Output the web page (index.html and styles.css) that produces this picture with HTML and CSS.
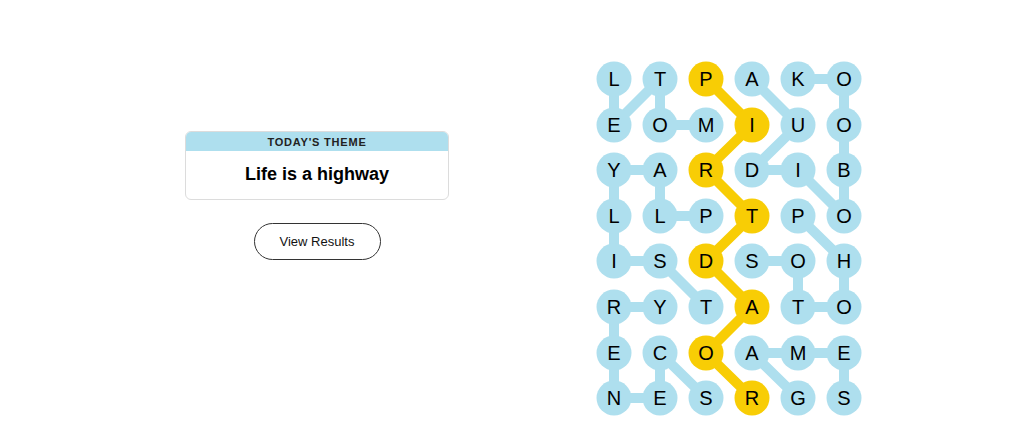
FILE: index.html
```html
<!DOCTYPE html>
<html lang="en">
<head>
  <meta charset="UTF-8">
  <title>Strands</title>
  <link rel="stylesheet" href="styles.css">
</head>
<body>

  <div class="board">
    <div class="panel">
      <div class="theme-card">
        <div class="theme-label">Today's Theme</div>
        <div class="theme-title">Life is a highway</div>
      </div>
      <button class="results-btn">View Results</button>
    </div>

    <svg class="grid" width="268" height="355" viewBox="-2 -1 268 355">
      <g class="links found">
        <!-- MOTEL -->
        <line x1="109" y1="63" x2="63" y2="63"/>
        <line x1="63" y1="63" x2="63" y2="17"/>
        <line x1="63" y1="17" x2="17" y2="63"/>
        <line x1="17" y1="63" x2="17" y2="17"/>
        <!-- PLAYLIST -->
        <line x1="109" y1="154" x2="63" y2="154"/>
        <line x1="63" y1="154" x2="63" y2="108"/>
        <line x1="63" y1="108" x2="17" y2="108"/>
        <line x1="17" y1="108" x2="17" y2="154"/>
        <line x1="17" y1="154" x2="17" y2="199"/>
        <line x1="17" y1="199" x2="63" y2="199"/>
        <line x1="63" y1="199" x2="109" y2="245"/>
        <!-- SCENERY -->
        <line x1="109" y1="336" x2="63" y2="291"/>
        <line x1="63" y1="291" x2="63" y2="336"/>
        <line x1="63" y1="336" x2="17" y2="336"/>
        <line x1="17" y1="336" x2="17" y2="291"/>
        <line x1="17" y1="291" x2="17" y2="245"/>
        <line x1="17" y1="245" x2="63" y2="245"/>
        <!-- AUDIOBOOK -->
        <line x1="155" y1="17" x2="201" y2="63"/>
        <line x1="201" y1="63" x2="155" y2="108"/>
        <line x1="155" y1="108" x2="201" y2="108"/>
        <line x1="201" y1="108" x2="247" y2="154"/>
        <line x1="247" y1="154" x2="247" y2="108"/>
        <line x1="247" y1="108" x2="247" y2="63"/>
        <line x1="247" y1="63" x2="247" y2="17"/>
        <line x1="247" y1="17" x2="201" y2="17"/>
        <!-- GAMES -->
        <line x1="201" y1="336" x2="155" y2="291"/>
        <line x1="155" y1="291" x2="201" y2="291"/>
        <line x1="201" y1="291" x2="247" y2="291"/>
        <line x1="247" y1="291" x2="247" y2="336"/>
        <!-- PHOTOS -->
        <line x1="201" y1="154" x2="247" y2="199"/>
        <line x1="247" y1="199" x2="247" y2="245"/>
        <line x1="247" y1="245" x2="201" y2="245"/>
        <line x1="201" y1="245" x2="201" y2="199"/>
        <line x1="201" y1="199" x2="155" y2="199"/>
      </g>
      <g class="links spangram">
        <!-- ROADTRIP -->
        <line x1="155" y1="336" x2="109" y2="291"/>
        <line x1="109" y1="291" x2="155" y2="245"/>
        <line x1="155" y1="245" x2="109" y2="199"/>
        <line x1="109" y1="199" x2="155" y2="154"/>
        <line x1="155" y1="154" x2="109" y2="108"/>
        <line x1="109" y1="108" x2="155" y2="63"/>
        <line x1="155" y1="63" x2="109" y2="17"/>
      </g>

      <g class="cells">
        <circle cx="17" cy="17"/><circle cx="63" cy="17"/><circle class="sp" cx="109" cy="17"/><circle cx="155" cy="17"/><circle cx="201" cy="17"/><circle cx="247" cy="17"/>
        <circle cx="17" cy="63"/><circle cx="63" cy="63"/><circle cx="109" cy="63"/><circle class="sp" cx="155" cy="63"/><circle cx="201" cy="63"/><circle cx="247" cy="63"/>
        <circle cx="17" cy="108"/><circle cx="63" cy="108"/><circle class="sp" cx="109" cy="108"/><circle cx="155" cy="108"/><circle cx="201" cy="108"/><circle cx="247" cy="108"/>
        <circle cx="17" cy="154"/><circle cx="63" cy="154"/><circle cx="109" cy="154"/><circle class="sp" cx="155" cy="154"/><circle cx="201" cy="154"/><circle cx="247" cy="154"/>
        <circle cx="17" cy="199"/><circle cx="63" cy="199"/><circle class="sp" cx="109" cy="199"/><circle cx="155" cy="199"/><circle cx="201" cy="199"/><circle cx="247" cy="199"/>
        <circle cx="17" cy="245"/><circle cx="63" cy="245"/><circle cx="109" cy="245"/><circle class="sp" cx="155" cy="245"/><circle cx="201" cy="245"/><circle cx="247" cy="245"/>
        <circle cx="17" cy="291"/><circle cx="63" cy="291"/><circle class="sp" cx="109" cy="291"/><circle cx="155" cy="291"/><circle cx="201" cy="291"/><circle cx="247" cy="291"/>
        <circle cx="17" cy="336"/><circle cx="63" cy="336"/><circle cx="109" cy="336"/><circle class="sp" cx="155" cy="336"/><circle cx="201" cy="336"/><circle cx="247" cy="336"/>
      </g>

      <g class="letters">
        <text x="17" y="17">L</text><text x="63" y="17">T</text><text x="109" y="17">P</text><text x="155" y="17">A</text><text x="201" y="17">K</text><text x="247" y="17">O</text>
        <text x="17" y="63">E</text><text x="63" y="63">O</text><text x="109" y="63">M</text><text x="155" y="63">I</text><text x="201" y="63">U</text><text x="247" y="63">O</text>
        <text x="17" y="108">Y</text><text x="63" y="108">A</text><text x="109" y="108">R</text><text x="155" y="108">D</text><text x="201" y="108">I</text><text x="247" y="108">B</text>
        <text x="17" y="154">L</text><text x="63" y="154">L</text><text x="109" y="154">P</text><text x="155" y="154">T</text><text x="201" y="154">P</text><text x="247" y="154">O</text>
        <text x="17" y="199">I</text><text x="63" y="199">S</text><text x="109" y="199">D</text><text x="155" y="199">S</text><text x="201" y="199">O</text><text x="247" y="199">H</text>
        <text x="17" y="245">R</text><text x="63" y="245">Y</text><text x="109" y="245">T</text><text x="155" y="245">A</text><text x="201" y="245">T</text><text x="247" y="245">O</text>
        <text x="17" y="291">E</text><text x="63" y="291">C</text><text x="109" y="291">O</text><text x="155" y="291">A</text><text x="201" y="291">M</text><text x="247" y="291">E</text>
        <text x="17" y="336">N</text><text x="63" y="336">E</text><text x="109" y="336">S</text><text x="155" y="336">R</text><text x="201" y="336">G</text><text x="247" y="336">S</text>
      </g>
    </svg>
  </div>

</body>
</html>
```

FILE: styles.css
```css
body {
  margin: 0;
  padding: 0;
  background: #fff;
  font-family: 'Liberation Sans', Arial, sans-serif;
  color: #121212;
}

.board {
  display: flex;
  align-items: flex-start;
  padding-left: 185px;
  gap: 146px;
}

.panel {
  width: 264px;
  margin-top: 131px;
  display: flex;
  flex-direction: column;
  align-items: center;
}

.theme-card {
  width: 100%;
  box-sizing: border-box;
  border: 1px solid #dcdcdc;
  border-radius: 6px;
  overflow: hidden;
  text-align: center;
}

.theme-label {
  background: #aedfee;
  height: 19px;
  line-height: 20px;
  font-size: 11px;
  font-weight: bold;
  letter-spacing: 0.8px;
  text-transform: uppercase;
  color: #222;
}

.theme-title {
  height: 48px;
  line-height: 46px;
  font-size: 18px;
  font-weight: bold;
  color: #000;
}

.results-btn {
  margin-top: 23px;
  width: 127px;
  height: 37px;
  background: #fff;
  border: 1px solid #333;
  border-radius: 19px;
  font-family: 'Liberation Sans', Arial, sans-serif;
  font-size: 13px;
  color: #121212;
  cursor: pointer;
}

.grid {
  margin-top: 61px;
  display: block;
}

.links line {
  stroke-width: 10;
  stroke-linecap: round;
}

.links.found line {
  stroke: #aedfee;
}

.links.spangram line {
  stroke: #f8cd05;
}

.cells circle {
  r: 17.5px;
  fill: #aedfee;
}

.cells circle.sp {
  fill: #f8cd05;
}

.letters text {
  font-family: 'Liberation Sans', Arial, sans-serif;
  font-size: 20px;
  fill: #000;
  text-anchor: middle;
  dominant-baseline: central;
}
```
